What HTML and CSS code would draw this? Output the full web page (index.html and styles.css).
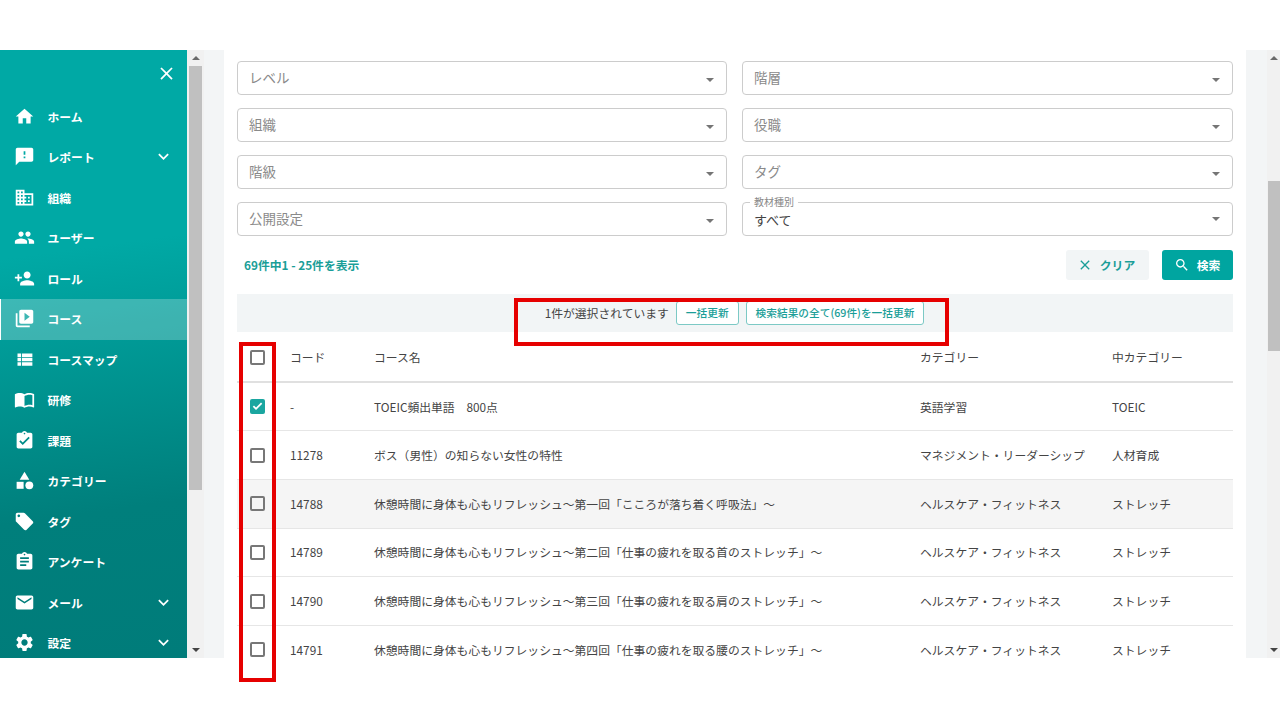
FILE: index.html
```html
<!DOCTYPE html>
<html lang="ja">
<head>
<meta charset="utf-8">
<title>コース</title>
<link rel="stylesheet" href="styles.css">
</head>
<body>
<div class="slide">
  <div class="app">
    <aside class="sidebar">
      <div class="side-head">
        <svg class="close" viewBox="0 0 24 24"><path d="M19 6.41L17.59 5 12 10.59 6.41 5 5 6.41 10.59 12 5 17.59 6.41 19 12 13.41 17.59 19 19 17.59 13.41 12z"/></svg>
      </div>
      <nav>
        <a class="item"><svg class="ico" viewBox="0 0 24 24"><path d="M10 20v-6h4v6h5v-8h3L12 3 2 12h3v8z"/></svg><span class="lbl">ホーム</span></a>
        <a class="item"><svg class="ico" viewBox="0 0 24 24"><path d="M20 2H4c-1.1 0-1.99.9-1.99 2L2 22l4-4h14c1.1 0 2-.9 2-2V4c0-1.1-.9-2-2-2zm-7 12h-2v-2h2v2zm0-4h-2V6h2v4z"/></svg><span class="lbl">レポート</span><svg class="chev" viewBox="0 0 24 24"><path d="M16.59 8.59L12 13.17 7.41 8.59 6 10l6 6 6-6z"/></svg></a>
        <a class="item"><svg class="ico" viewBox="0 0 24 24"><path d="M12 7V3H2v18h20V7H12zM6 19H4v-2h2v2zm0-4H4v-2h2v2zm0-4H4V9h2v2zm0-4H4V5h2v2zm4 12H8v-2h2v2zm0-4H8v-2h2v2zm0-4H8V9h2v2zm0-4H8V5h2v2zm10 12h-8v-2h2v-2h-2v-2h2v-2h-2V9h8v10zm-2-8h-2v2h2v-2zm0 4h-2v2h2v-2z"/></svg><span class="lbl">組織</span></a>
        <a class="item"><svg class="ico" viewBox="0 0 24 24"><path d="M16 11c1.66 0 2.99-1.34 2.99-3S17.66 5 16 5c-1.66 0-3 1.34-3 3s1.34 3 3 3zm-8 0c1.66 0 2.99-1.34 2.99-3S9.66 5 8 5C6.34 5 5 6.34 5 8s1.34 3 3 3zm0 2c-2.33 0-7 1.17-7 3.5V19h14v-2.5c0-2.33-4.67-3.5-7-3.5zm8 0c-.29 0-.62.02-.97.05 1.16.84 1.97 1.97 1.97 3.45V19h6v-2.5c0-2.33-4.67-3.5-7-3.5z"/></svg><span class="lbl">ユーザー</span></a>
        <a class="item"><svg class="ico" viewBox="0 0 24 24"><path d="M15 12c2.21 0 4-1.79 4-4s-1.79-4-4-4-4 1.79-4 4 1.79 4 4 4zm-9-2V7H4v3H1v2h3v3h2v-3h3v-2H6zm9 4c-2.67 0-8 1.34-8 4v2h16v-2c0-2.66-5.33-4-8-4z"/></svg><span class="lbl">ロール</span></a>
        <a class="item active"><svg class="ico" viewBox="0 0 24 24"><path d="M4 6H2v14c0 1.1.9 2 2 2h14v-2H4V6zm16-4H8c-1.1 0-2 .9-2 2v12c0 1.1.9 2 2 2h12c1.1 0 2-.9 2-2V4c0-1.1-.9-2-2-2zm-8 12.5v-9l6 4.5-6 4.5z"/></svg><span class="lbl">コース</span></a>
        <a class="item"><svg class="ico" viewBox="0 0 24 24"><path d="M4 14h4v-4H4v4zm0 5h4v-4H4v4zM4 9h4V5H4v4zm5 5h12v-4H9v4zm0 5h12v-4H9v4zM9 5v4h12V5H9z"/></svg><span class="lbl">コースマップ</span></a>
        <a class="item"><svg class="ico" viewBox="0 0 24 24"><path d="M21 5c-1.11-.35-2.33-.5-3.5-.5-1.95 0-4.05.4-5.5 1.5-1.45-1.1-3.55-1.5-5.5-1.5S2.45 4.9 1 6v14.65c0 .25.25.5.5.5.1 0 .15-.05.25-.05C3.1 20.45 5.05 20 6.5 20c1.95 0 4.05.4 5.5 1.5 1.35-.85 3.8-1.5 5.5-1.5 1.65 0 3.35.3 4.75 1.05.1.05.15.05.25.05.25 0 .5-.25.5-.5V6c-.6-.45-1.25-.75-2-1zm0 13.5c-1.1-.35-2.3-.5-3.5-.5-1.7 0-4.15.65-5.5 1.5V8c1.35-.85 3.8-1.5 5.5-1.5 1.2 0 2.4.15 3.5.5v11.5z"/></svg><span class="lbl">研修</span></a>
        <a class="item"><svg class="ico" viewBox="0 0 24 24"><path d="M19 3h-4.18C14.4 1.84 13.3 1 12 1c-1.3 0-2.4.84-2.82 2H5c-1.1 0-2 .9-2 2v14c0 1.1.9 2 2 2h14c1.1 0 2-.9 2-2V5c0-1.1-.9-2-2-2zm-7 0c.55 0 1 .45 1 1s-.45 1-1 1-1-.45-1-1 .45-1 1-1zm-2 14l-4-4 1.41-1.41L10 14.17l6.59-6.59L18 9l-8 8z"/></svg><span class="lbl">課題</span></a>
        <a class="item"><svg class="ico" viewBox="0 0 24 24"><path d="M12 2l-5.5 9h11z"/><circle cx="17.5" cy="17.5" r="4.5"/><path d="M3 13.5h8v8H3z"/></svg><span class="lbl">カテゴリー</span></a>
        <a class="item"><svg class="ico" viewBox="0 0 24 24"><path d="M21.41 11.58l-9-9C12.05 2.22 11.55 2 11 2H4c-1.1 0-2 .9-2 2v7c0 .55.22 1.05.59 1.42l9 9c.36.36.86.58 1.41.58.55 0 1.05-.22 1.41-.59l7-7c.37-.36.59-.86.59-1.41 0-.55-.23-1.06-.59-1.42zM5.5 7C4.67 7 4 6.33 4 5.5S4.67 4 5.5 4 7 4.67 7 5.5 6.33 7 5.5 7z"/></svg><span class="lbl">タグ</span></a>
        <a class="item"><svg class="ico" viewBox="0 0 24 24"><path d="M19 3h-4.18C14.4 1.84 13.3 1 12 1c-1.3 0-2.4.84-2.82 2H5c-1.1 0-2 .9-2 2v14c0 1.1.9 2 2 2h14c1.1 0 2-.9 2-2V5c0-1.1-.9-2-2-2zm-7 0c.55 0 1 .45 1 1s-.45 1-1 1-1-.45-1-1 .45-1 1-1zm2 14H7v-2h7v2zm3-4H7v-2h10v2zm0-4H7V7h10v2z"/></svg><span class="lbl">アンケート</span></a>
        <a class="item"><svg class="ico" viewBox="0 0 24 24"><path d="M20 4H4c-1.1 0-1.99.9-1.99 2L2 18c0 1.1.9 2 2 2h16c1.1 0 2-.9 2-2V6c0-1.1-.9-2-2-2zm0 4l-8 5-8-5V6l8 5 8-5v2z"/></svg><span class="lbl">メール</span><svg class="chev" viewBox="0 0 24 24"><path d="M16.59 8.59L12 13.17 7.41 8.59 6 10l6 6 6-6z"/></svg></a>
        <a class="item"><svg class="ico" viewBox="0 0 24 24"><path d="M19.14 12.94c.04-.3.06-.61.06-.94 0-.32-.02-.64-.07-.94l2.03-1.58c.18-.14.23-.41.12-.61l-1.92-3.32c-.12-.22-.37-.29-.59-.22l-2.39.96c-.5-.38-1.03-.7-1.62-.94l-.36-2.54c-.04-.24-.24-.41-.48-.41h-3.84c-.24 0-.43.17-.47.41l-.36 2.54c-.59.24-1.13.57-1.62.94l-2.39-.96c-.22-.08-.47 0-.59.22L2.74 8.87c-.12.21-.08.47.12.61l2.03 1.58c-.05.3-.09.63-.09.94s.02.64.07.94l-2.03 1.58c-.18.14-.23.41-.12.61l1.92 3.32c.12.22.37.29.59.22l2.39-.96c.5.38 1.03.7 1.62.94l.36 2.54c.05.24.24.41.48.41h3.84c.24 0 .44-.17.47-.41l.36-2.54c.59-.24 1.13-.56 1.62-.94l2.39.96c.22.08.47 0 .59-.22l1.92-3.32c.12-.22.07-.47-.12-.61l-2.01-1.58zM12 15.6c-1.98 0-3.6-1.62-3.6-3.6s1.62-3.6 3.6-3.6 3.6 1.62 3.6 3.6-1.62 3.6-3.6 3.6z"/></svg><span class="lbl">設定</span><svg class="chev" viewBox="0 0 24 24"><path d="M16.59 8.59L12 13.17 7.41 8.59 6 10l6 6 6-6z"/></svg></a>
      </nav>
    </aside>

    <div class="scrollbar side-scroll">
      <span class="arrow up"></span>
      <span class="thumb side-thumb"></span>
      <span class="arrow down"></span>
    </div>

    <div class="gutter"></div>

    <main class="content">
      <div class="filters">
        <div class="field"><span class="ph">レベル</span><span class="caret"></span></div>
        <div class="field"><span class="ph">階層</span><span class="caret"></span></div>
        <div class="field"><span class="ph">組織</span><span class="caret"></span></div>
        <div class="field"><span class="ph">役職</span><span class="caret"></span></div>
        <div class="field"><span class="ph">階級</span><span class="caret"></span></div>
        <div class="field"><span class="ph">タグ</span><span class="caret"></span></div>
        <div class="field"><span class="ph">公開設定</span><span class="caret"></span></div>
        <div class="field filled"><span class="legend">教材種別</span><span class="val">すべて</span><span class="caret"></span></div>
      </div>

      <div class="toolbar">
        <span class="count">69件中1 - 25件を表示</span>
        <div class="actions">
          <button class="btn clear"><svg class="btn-ico" viewBox="0 0 24 24"><path d="M19 6.41L17.59 5 12 10.59 6.41 5 5 6.41 10.59 12 5 17.59 6.41 19 12 13.41 17.59 19 19 17.59 13.41 12z"/></svg>クリア</button>
          <button class="btn search"><svg class="btn-ico" viewBox="0 0 24 24"><path d="M15.5 14h-.79l-.28-.27C15.41 12.59 16 11.11 16 9.5 16 5.91 13.09 3 9.5 3S3 5.91 3 9.5 5.91 16 9.5 16c1.61 0 3.09-.59 4.23-1.57l.27.28v.79l5 4.99L20.49 19l-4.99-5zm-6 0C7.01 14 5 11.99 5 9.5S7.01 5 9.5 5 14 7.01 14 9.5 11.99 14 9.5 14z"/></svg>検索</button>
        </div>
      </div>

      <div class="selbar">
        <span>1件が選択されています</span>
        <button class="outline">一括更新</button>
        <button class="outline">検索結果の全て(69件)を一括更新</button>
      </div>

      <table class="grid">
        <colgroup><col class="c-check"><col class="c-code"><col class="c-name"><col class="c-cat"><col class="c-mid"></colgroup>
        <thead>
          <tr><th><span class="box"></span></th><th>コード</th><th>コース名</th><th>カテゴリー</th><th>中カテゴリー</th></tr>
        </thead>
        <tbody>
          <tr><td><span class="box checked"><svg viewBox="0 0 24 24"><path d="M9.6 17.6L4.4 12.4l2-2 3.2 3.2 8-8 2 2z"/></svg></span></td><td>-</td><td>TOEIC頻出単語　800点</td><td>英語学習</td><td>TOEIC</td></tr>
          <tr><td><span class="box"></span></td><td>11278</td><td>ボス（男性）の知らない女性の特性</td><td>マネジメント・リーダーシップ</td><td>人材育成</td></tr>
          <tr class="hover"><td><span class="box"></span></td><td>14788</td><td>休憩時間に身体も心もリフレッシュ～第一回「こころが落ち着く呼吸法」～</td><td>ヘルスケア・フィットネス</td><td>ストレッチ</td></tr>
          <tr><td><span class="box"></span></td><td>14789</td><td>休憩時間に身体も心もリフレッシュ～第二回「仕事の疲れを取る首のストレッチ」～</td><td>ヘルスケア・フィットネス</td><td>ストレッチ</td></tr>
          <tr><td><span class="box"></span></td><td>14790</td><td>休憩時間に身体も心もリフレッシュ～第三回「仕事の疲れを取る肩のストレッチ」～</td><td>ヘルスケア・フィットネス</td><td>ストレッチ</td></tr>
          <tr><td><span class="box"></span></td><td>14791</td><td>休憩時間に身体も心もリフレッシュ～第四回「仕事の疲れを取る腰のストレッチ」～</td><td>ヘルスケア・フィットネス</td><td>ストレッチ</td></tr>
        </tbody>
      </table>
    </main>

    <div class="gutter right"></div>

    <div class="scrollbar page-scroll">
      <span class="arrow up"></span>
      <span class="thumb page-thumb"></span>
      <span class="arrow down"></span>
    </div>
  </div>

  <div class="mark mark-bar"></div>
  <div class="mark mark-col"></div>
</div>
</body>
</html>
```

FILE: styles.css
```css
* { box-sizing: border-box; }
html, body { margin: 0; padding: 0; background: #fff; }
body {
  width: 1280px;
  height: 720px;
  overflow: hidden;
  font-family: "Noto Sans CJK JP", "Noto Sans", sans-serif;
  font-size: 11.8px;
  color: #444;
}
.slide { position: relative; width: 1280px; height: 720px; padding-top: 50px; background: #fff; }
.app { display: flex; height: 608px; overflow: hidden; }

/* sidebar */
.sidebar {
  flex: 0 0 187px;
  height: 608px;
  overflow: hidden;
  color: #fff;
  background: linear-gradient(172deg, #00a9a5 0%, #00a9a5 33%, #007f7c 75%, #007c7a 100%);
}
.side-head { height: 46.5px; display: flex; justify-content: flex-end; align-items: flex-start; padding: 13px 10px 0 0; }
.close { width: 21px; height: 21px; fill: #fff; }
.item { display: flex; align-items: center; height: 40.5px; padding-left: 13px; border-left: 1px solid transparent; }
.item.active { background: rgba(255,255,255,.24); border-left-color: #fff; }
.ico { width: 21px; height: 21px; fill: #fff; flex: none; margin-top: -1px; }
.lbl { margin-left: 12.5px; margin-top: -1px; font-weight: 700; font-size: 11.8px; flex: 1; }
.chev { width: 21px; height: 21px; fill: #fff; flex: none; margin-right: 13px; margin-top: -1px; }

/* scrollbars */
.scrollbar { position: relative; flex: none; background: #f1f1f1; display: flex; flex-direction: column; align-items: center; }
.side-scroll { width: 17px; padding: 0 2px; }
.page-scroll { width: 13px; padding-left: 1px; }
.arrow { position: absolute; width: 0; height: 0; border-left: 4px solid transparent; border-right: 4px solid transparent; }
.arrow.up { top: 6px; border-bottom: 4px solid #6a6a6a; }
.arrow.down { bottom: 6px; border-top: 4px solid #444; }
.thumb { display: block; width: 100%; background: #c0c0c0; }
.side-thumb { margin-top: 16px; height: 424px; }
.page-thumb { margin-top: 131px; height: 170px; }

.gutter { flex: 0 0 20px; background: #f3f5f6; }
.gutter.right { flex-basis: 21px; }

/* main */
.content { flex: 0 0 1022px; padding: 11px 13px 0; background: #fff; overflow: hidden; }
.filters { display: grid; grid-template-columns: 490px 491px; column-gap: 15px; row-gap: 13.5px; }
.field {
  position: relative;
  display: flex;
  align-items: center;
  height: 33.5px;
  padding: 0 0 2px 11px;
  border: 1px solid #ccc;
  border-radius: 4px;
  font-size: 13.5px;
}
.ph { color: #8a8a8a; }
.val { color: #444; font-size: 13px; }
.caret { position: absolute; right: 12px; top: 16px; width: 0; height: 0; border-left: 4.5px solid transparent; border-right: 4.5px solid transparent; border-top: 4.5px solid #757575; }
.filled .caret { top: 14px; }
.legend { position: absolute; left: 7px; top: -8px; padding: 0 4px; background: #fff; font-size: 10px; line-height: 14px; color: #888; }
.filled .val { margin-top: 3px; }

.toolbar { display: flex; align-items: center; justify-content: space-between; margin-top: 14.5px; height: 30px; padding-left: 7px; }
.count { font-weight: 700; color: #1a9e98; margin-top: -2px; }
.actions { display: flex; gap: 13px; }
.btn {
  display: flex;
  align-items: center;
  justify-content: center;
  height: 30px;
  border: 0;
  border-radius: 3px;
  font: 700 11.8px "Noto Sans CJK JP", sans-serif;
  padding: 0 0 1px;
}
.btn-ico { width: 16px; height: 16px; margin-right: 7px; }
.clear { width: 83px; padding-right: 3px; background: #f2f5f6; color: #1a9e98; }
.clear .btn-ico { fill: #1a9e98; }
.search { width: 71px; padding-right: 1px; background: #00a5a0; color: #fff; }
.search .btn-ico { fill: #fff; }

.selbar {
  display: flex;
  align-items: center;
  justify-content: center;
  gap: 7px;
  height: 38px;
  margin-top: 14px;
  padding: 0 1px 1px 0;
  background: #f2f5f6;
}
.outline {
  height: 24px;
  padding: 0 9px;
  background: #fff;
  border: 1px solid #7cc9c5;
  border-radius: 3px;
  color: #1a9e98;
  font: 500 10.7px "Noto Sans CJK JP", sans-serif;
}

.grid { width: 996px; margin-top: 1px; border-collapse: collapse; table-layout: fixed; }
.c-check { width: 53px; }
.c-code { width: 84px; }
.c-name { width: 546px; }
.c-cat { width: 192px; }
.c-mid { width: 121px; }
th, td { padding: 0 0 1px; text-align: left; font-size: 11.8px; white-space: nowrap; vertical-align: middle; }
th { height: 49px; font-weight: 400; border-bottom: 2px solid #e0e0e0; }
td { height: 48.7px; border-bottom: 1px solid #e6e6e6; }
.hover td { background: #f5f5f5; }
.box { display: block; width: 15px; height: 15px; margin: 1px 0 0 13px; border: 2px solid #777; border-radius: 2px; background: transparent; }
.box.checked { border: 0; background: #1aa6a0; }
.box svg { display: block; width: 15px; height: 15px; fill: #fff; }

/* annotation rectangles laid over the screenshot */
.mark { position: absolute; border: 4px solid #e60000; }
.mark-bar { left: 514px; top: 298px; width: 435px; height: 48px; }
.mark-col { left: 239px; top: 342px; width: 37px; height: 340px; }
```
